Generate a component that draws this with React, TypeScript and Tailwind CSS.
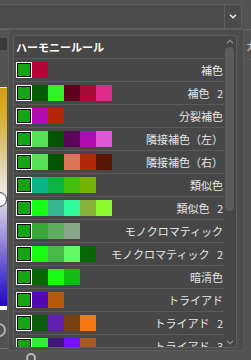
const BASE = '#14a414'

const rows: { label: string; colors: string[] }[] = [
  { label: '補色', colors: ['#b4063a'] },
  { label: '補色 2', colors: ['#045c04', '#2ef22e', '#5c0020', '#a80c3a', '#e02c8a'] },
  { label: '分裂補色', colors: ['#b40cb4', '#b42808'] },
  { label: '隣接補色（左）', colors: ['#56e056', '#045404', '#5a045a', '#b40cb4', '#e056d8'] },
  { label: '隣接補色（右）', colors: ['#56e056', '#045404', '#e0725a', '#b42808', '#5a1404'] },
  { label: '類似色', colors: ['#0cb48a', '#0cb444', '#44c00c', '#76b404'] },
  { label: '類似色 2', colors: ['#16fc16', '#36b48e', '#2efa9a', '#86b036', '#8af82e'] },
  { label: 'モノクロマティック', colors: ['#38a838', '#5eac5e', '#88a888'] },
  { label: 'モノクロマティック 2', colors: ['#16fc16', '#48b848', '#64f864', '#086808'] },
  { label: '暗清色', colors: ['#086808', '#16fc16', '#12bc12'] },
  { label: 'トライアド', colors: ['#5408b4', '#b45a08'] },
  { label: 'トライアド 2', colors: ['#0c5c0c', '#6220b4', '#784010', '#f87810'] },
  { label: 'トライアド 3', colors: ['#2ef22e', '#44147c', '#7810f8', '#a85a20'] },
]

function Chevron({ up, color }: { up?: boolean; color: string }) {
  return (
    <svg width="8" height="5" viewBox="0 0 8 5" fill="none">
      <path d={up ? 'M1 4.2L4 1.2L7 4.2' : 'M1 0.8L4 3.8L7 0.8'} stroke={color} strokeWidth="1.3" />
    </svg>
  )
}

export default function App() {
  return (
    <div className="relative h-[360px] w-[251px] overflow-hidden bg-[#535353] font-['Noto_Sans_CJK_JP',sans-serif]">
      {/* select box */}
      <div className="pt-[4px]">
        <div className="flex h-[25px] w-[242px] border border-l-0 border-[#606060] bg-[#4b4b4b]">
          <div className="flex-1" />
          <div className="flex w-[17px] items-center justify-center border-l border-[#606060]">
            <Chevron color="#f0f0f0" />
          </div>
        </div>
      </div>

      {/* panels underneath */}
      <div className="flex h-[331px]">
        <div className="flex w-[8px] flex-col border-t border-[#686868]">
          <div className="mt-[8px] h-[12px] w-[7px] bg-[#3a3a3a]" />
          <div className="relative mt-[37px] h-[219px] w-[7px] border-t border-[#e4e4e4] bg-[linear-gradient(to_bottom,#d4a010_0%,#d6b23a_15%,#ddd0a0_33%,#ece8e0_47%,#c4bce0_58%,#9a88d8_70%,#5040d0_86%,#2404c8_100%)]">
            <div className="absolute left-[-8px] top-[104px] h-[15px] w-[15px] rounded-full border border-[#3a3a3a] bg-white" />
          </div>
          <div className="h-[4px] w-[7px] bg-white" />
          <div className="ml-[-8px] mt-[13px] h-[14px] w-[14px] rounded-full border-2 border-[#b0b0b0]" />
          <div className="mt-[11px] h-px w-[8px] bg-[#6e6e6e]" />
        </div>
        <div className="flex flex-1 flex-col justify-end">
          <div className="mb-[-3px] ml-[18px] h-[10px] w-[10px] rounded-full border-2 border-[#b8b8b8]" />
        </div>
        <div className="w-[8px] overflow-hidden border-t border-[#686868] pl-[3px]">
          <div className="mt-[10px] text-[11px] leading-[12px] whitespace-nowrap text-[#dddddd]">カラー</div>
          <div className="mt-[7px] h-px w-full bg-[#5e5e5e]" />
        </div>
      </div>

      {/* harmony rule popup */}
      <div className="absolute left-[8px] top-[29px] h-[322px] w-[236px] border border-[#5a5a5a] bg-[#4d4d4d] pl-[4px] pt-[5px]">
        <div className="flex h-[313px] w-[224px] overflow-hidden rounded-[3px] border border-[#5e5e5e] bg-[#474747]">
          <div className="flex flex-1 flex-col">
            <div className="flex h-[22px] shrink-0 items-center pl-[2px] text-[11px] font-bold text-white">ハーモニールール</div>
            {rows.map(r => (
              <div key={r.label} className="flex h-[23px] shrink-0 items-center justify-between border-t border-[#5a5a5a] pl-[2px] pr-[1px]">
                <div className="flex">
                  <div className="h-[16px] w-[16px] border border-white shadow-[inset_0_0_0_1px_#000]" style={{ backgroundColor: BASE }} />
                  {r.colors.map((c, i) => (
                    <div key={i} className="h-[16px] w-[16px]" style={{ backgroundColor: c }} />
                  ))}
                </div>
                <div className="text-[11px] leading-[14px] whitespace-nowrap text-[#e6e6e6] [word-spacing:5px]">{r.label}</div>
              </div>
            ))}
          </div>
          <div className="flex w-[12px] flex-col items-center">
            <div className="mt-[3px] flex h-[5px] items-center">
              <Chevron up color="#8a8a8a" />
            </div>
            <div className="mt-[3px] ml-[1px] h-[164px] w-[9px] self-start rounded-full bg-[#5c5c5c]" />
            <div className="mb-[2px] mt-auto flex h-[5px] items-center">
              <Chevron color="#8a8a8a" />
            </div>
          </div>
        </div>
      </div>
    </div>
  )
}
